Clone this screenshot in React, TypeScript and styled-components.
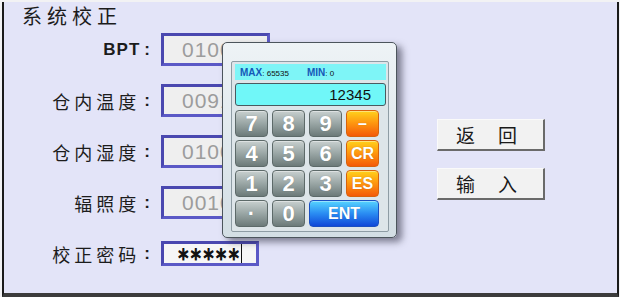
import React, { ReactElement } from 'react';
import styled, { createGlobalStyle, css } from 'styled-components';

const GlobalStyle = createGlobalStyle`
  html, body {
    margin: 0;
    padding: 0;
    background: #f2f2f4;
  }
  body {
    font-family: "Noto Sans CJK SC", "Noto Sans", sans-serif;
  }
`;

type KeyVariant = 'gray' | 'orange' | 'blue';

const fields = [
  { label: 'BPT', value: '0100', latin: true },
  { label: '仓内温度', value: '0091' },
  { label: '仓内湿度', value: '0100' },
  { label: '辐照度', value: '0010' },
];

const keys: { text: string; variant: KeyVariant; wide?: boolean; small?: boolean }[] = [
  { text: '7', variant: 'gray' },
  { text: '8', variant: 'gray' },
  { text: '9', variant: 'gray' },
  { text: '–', variant: 'orange', small: true },
  { text: '4', variant: 'gray' },
  { text: '5', variant: 'gray' },
  { text: '6', variant: 'gray' },
  { text: 'CR', variant: 'orange', small: true },
  { text: '1', variant: 'gray' },
  { text: '2', variant: 'gray' },
  { text: '3', variant: 'gray' },
  { text: 'ES', variant: 'orange', small: true },
  { text: '·', variant: 'gray' },
  { text: '0', variant: 'gray' },
  { text: 'ENT', variant: 'blue', wide: true, small: true },
];

function App(): ReactElement {
  return (
    <>
      <GlobalStyle />
      <Screen>
        <Panel>
          <Title>系统校正</Title>
          <Body>
            <Form>
              {fields.map((f) => (
                <Row key={f.label}>
                  <Label latin={f.latin}>
                    {f.label}
                    <Colon>:</Colon>
                  </Label>
                  <ValueBox>{f.value}</ValueBox>
                </Row>
              ))}
              <Row>
                <Label>
                  校正密码<Colon>:</Colon>
                </Label>
                <PasswordBox>
                  <span>＊＊＊＊＊</span>
                  <Caret />
                </PasswordBox>
              </Row>
            </Form>
            <Actions>
              <ActionButton>
                <span>返</span>
                <span>回</span>
              </ActionButton>
              <ActionButton>
                <span>输</span>
                <span>入</span>
              </ActionButton>
            </Actions>
          </Body>

          <Keypad>
            <KeypadInner>
              <LimitBar>
                <LimitItem>
                  <b>MAX</b>: 65535
                </LimitItem>
                <LimitItem>
                  <b>MIN</b>: 0
                </LimitItem>
              </LimitBar>
              <Display>12345</Display>
              <KeyGrid>
                {keys.map((k) => (
                  <Key key={k.text} variant={k.variant} wide={k.wide} small={k.small}>
                    {k.text}
                  </Key>
                ))}
              </KeyGrid>
            </KeypadInner>
          </Keypad>
        </Panel>
      </Screen>
    </>
  );
}

const Screen = styled.div`
  width: 620px;
  height: 297px;
  padding: 2px 1px 0 2px;
  box-sizing: border-box;
  overflow: hidden;
`;

const Panel = styled.div`
  position: relative;
  height: 295px;
  box-sizing: border-box;
  background: #e3e4f8;
  border-left: 2px solid #1a1a1a;
  border-right: 2px solid #1a1a1a;
  border-bottom: 4px solid #3c3c3c;
  padding: 2px 0 0 18px;
`;

const Title = styled.div`
  font-size: 20px;
  line-height: 24px;
  letter-spacing: 5px;
  color: #1c1c1c;
  font-family: "Noto Sans CJK SC", sans-serif;
`;

const Body = styled.div`
  display: flex;
  margin-top: 5px;
`;

const Form = styled.div`
  display: flex;
  flex-direction: column;
  gap: 18px;
`;

const Row = styled.div`
  display: flex;
  align-items: center;
  height: 33px;
`;

const Label = styled.div<{ latin?: boolean }>`
  width: 128px;
  display: flex;
  justify-content: flex-end;
  align-items: center;
  margin-right: 11px;
  color: #1c1c1c;
  ${({ latin }) =>
    latin
      ? css`
          font-family: "Liberation Sans", Arial, sans-serif;
          font-weight: bold;
          font-size: 17px;
          letter-spacing: 1px;
        `
      : css`
          font-family: "Noto Sans CJK SC", sans-serif;
          font-size: 18px;
          letter-spacing: 4px;
        `}
`;

const Colon = styled.span`
  font-family: "Liberation Sans", Arial, sans-serif;
  font-weight: bold;
  font-size: 17px;
  margin-left: 4px;
  letter-spacing: 0;
`;

const fieldBorder = css`
  box-sizing: border-box;
  border: 3px solid #5b59c6;
  border-top-color: #4a48b0;
  border-left-color: #4a48b0;
  background: #efefef;
`;

const ValueBox = styled.div`
  ${fieldBorder};
  width: 109px;
  height: 33px;
  padding-left: 18px;
  font-family: "Liberation Sans", Arial, sans-serif;
  font-size: 21px;
  line-height: 27px;
  color: #9c9c9c;
  letter-spacing: 1px;
`;

const PasswordBox = styled.div`
  ${fieldBorder};
  width: 98px;
  height: 25px;
  display: flex;
  align-items: center;
  justify-content: flex-end;
  padding-right: 14px;
  background: #f6f6f6;
  font-family: "Noto Sans CJK SC", sans-serif;
  font-weight: bold;
  font-size: 12px;
  color: #111;
  span {
    line-height: 19px;
    letter-spacing: 0;
    -webkit-text-stroke: 0.9px #111;
    transform: scale(1.05, 1.25);
    transform-origin: right center;
  }
`;

const Caret = styled.i`
  width: 1px;
  height: 19px;
  background: #111;
  margin-left: 1px;
`;

const Actions = styled.div`
  display: flex;
  flex-direction: column;
  gap: 17px;
  margin-left: 167px;
  margin-top: 86px;
`;

const ActionButton = styled.div`
  width: 108px;
  height: 32px;
  box-sizing: border-box;
  display: flex;
  justify-content: space-between;
  align-items: center;
  padding: 0 26px 0 18px;
  background: #f2f2f2;
  border-top: 1px solid #fafafa;
  border-left: 1px solid #fafafa;
  border-right: 2px solid #6a6a6a;
  border-bottom: 2px solid #6a6a6a;
  font-family: "Noto Sans CJK SC", sans-serif;
  font-size: 19px;
  color: #1a1a1a;
`;

const Keypad = styled.div`
  position: absolute;
  left: 218px;
  top: 40px;
  width: 175px;
  height: 196px;
  box-sizing: border-box;
  padding: 18px 7px 0 8px;
  border: 1px solid #4c555c;
  border-radius: 5px;
  background: linear-gradient(#eef3f6, #d3dee4);
  box-shadow: 5px 4px 7px rgba(40, 40, 60, 0.55);
`;

const KeypadInner = styled.div`
  height: 171px;
  box-sizing: border-box;
  padding: 2px 2px 0 3px;
  border: 1px solid #8e9ca4;
  border-radius: 2px;
  background: #dde5e9;
`;

const LimitBar = styled.div`
  height: 16px;
  display: flex;
  align-items: center;
  gap: 18px;
  padding-left: 5px;
  background: #7ef5f7;
  font-family: "Liberation Sans", Arial, sans-serif;
  font-size: 8px;
  color: #111;
`;

const LimitItem = styled.span`
  b {
    font-size: 10px;
    color: #1558b8;
  }
`;

const Display = styled.div`
  margin-top: 3px;
  height: 23px;
  box-sizing: border-box;
  border: 1px solid #4a5a60;
  border-radius: 3px;
  background: #70f7f8;
  text-align: right;
  padding-right: 14px;
  font-family: "Liberation Sans", Arial, sans-serif;
  font-size: 15px;
  line-height: 21px;
  color: #111;
`;

const keyColors: Record<KeyVariant, ReturnType<typeof css>> = {
  gray: css`
    background: linear-gradient(#c8d0cf 0%, #9eaaa9 45%, #6c7a79 100%);
    border: 1px solid #5d6a69;
  `,
  orange: css`
    background: linear-gradient(#ffd21c 0%, #ff9a10 45%, #f45a08 100%);
    border: 1px solid #d8620c;
  `,
  blue: css`
    background: linear-gradient(#56d4ff 0%, #2a8cf2 50%, #1048d8 100%);
    border: 1px solid #1a4fc0;
  `,
};

const KeyGrid = styled.div`
  margin-top: 4px;
  width: 146px;
  display: grid;
  grid-template-columns: repeat(4, 33px);
  grid-auto-rows: 27px;
  column-gap: 4px;
  row-gap: 3px;
`;

const Key = styled.div<{ variant: KeyVariant; wide?: boolean; small?: boolean }>`
  ${({ variant }) => keyColors[variant]};
  grid-column: ${({ wide }) => (wide ? 'span 2' : 'auto')};
  box-sizing: border-box;
  border-radius: 4px;
  display: flex;
  align-items: center;
  justify-content: center;
  color: #fff;
  font-family: "Liberation Sans", Arial, sans-serif;
  font-weight: bold;
  font-size: ${({ small }) => (small ? '16px' : '22px')};
  text-shadow: 0 0 1px rgba(0, 0, 0, 0.25);
  box-shadow: inset 0 1px 0 rgba(255, 255, 255, 0.4);
`;

export default App;
